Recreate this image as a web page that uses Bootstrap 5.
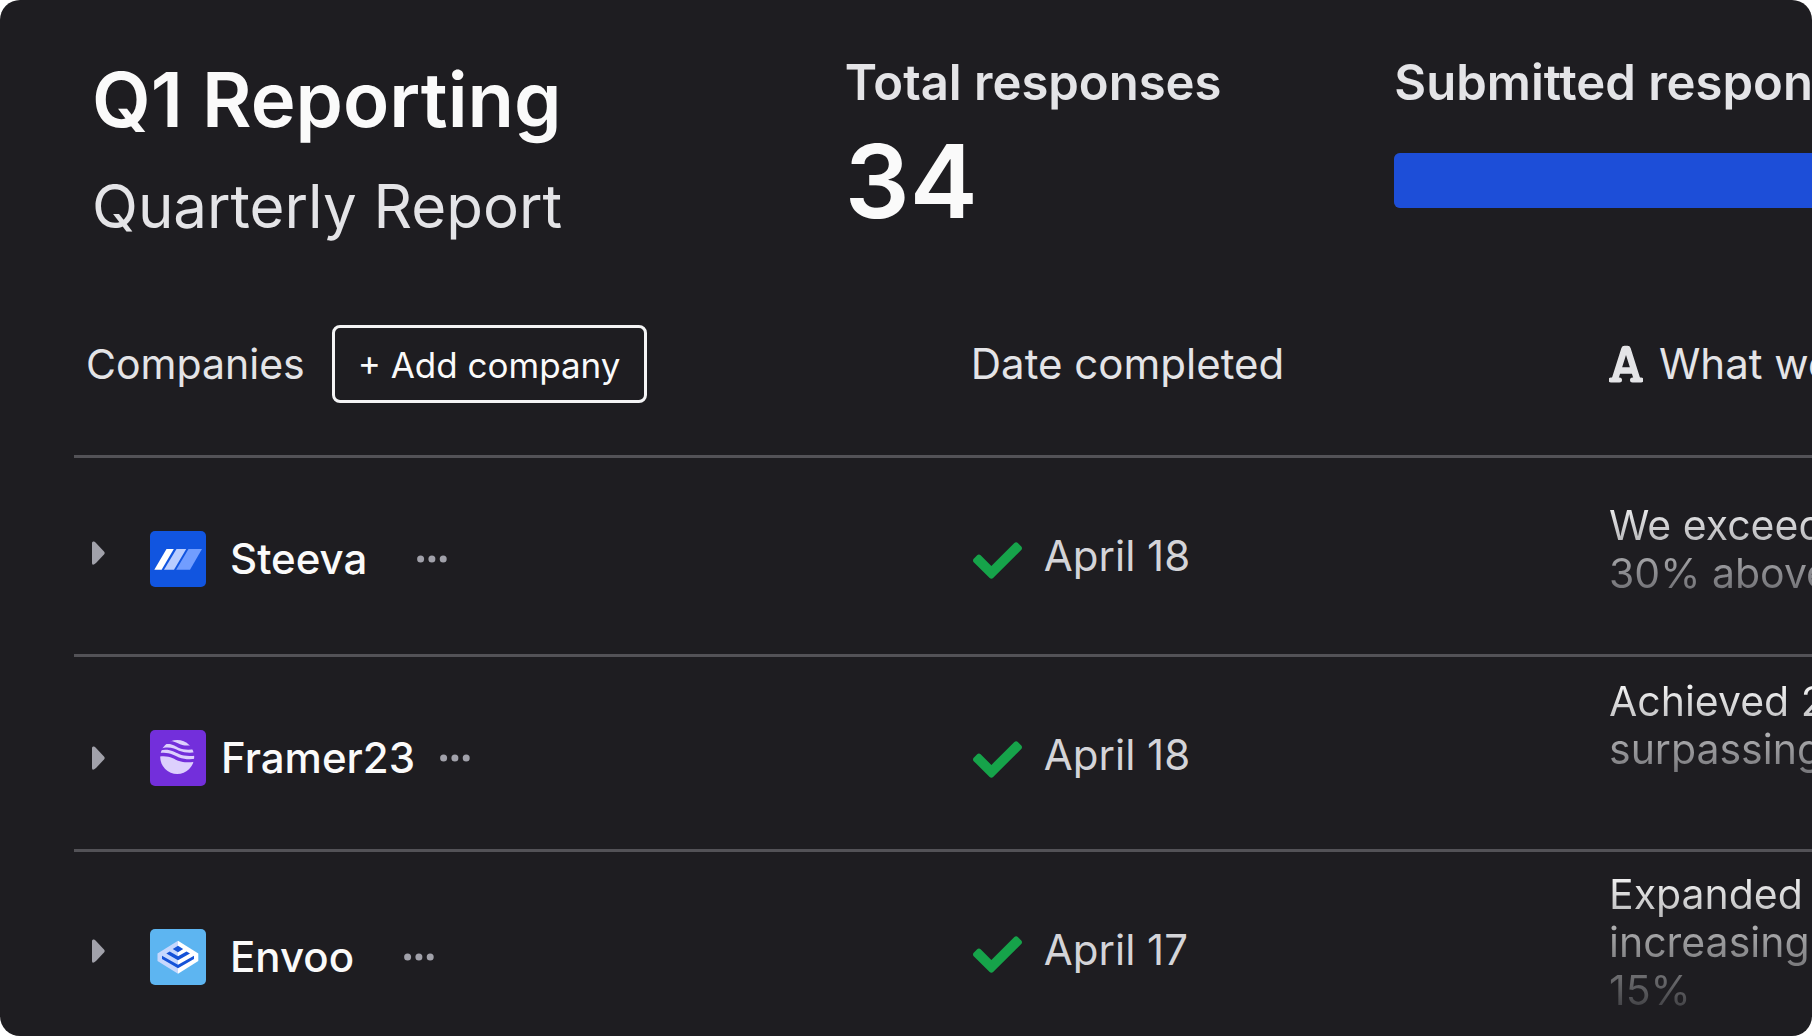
<!DOCTYPE html>
<html lang="en" data-bs-theme="dark">
<head>
<meta charset="utf-8">
<meta name="viewport" content="width=device-width, initial-scale=1">
<title>Q1 Reporting</title>
<link href="https://cdn.jsdelivr.net/npm/bootstrap@5.3.0/dist/css/bootstrap.min.css" rel="stylesheet">
<style>
  body { background: #fff; font-family: Inter, "Liberation Sans", sans-serif; font-size: 42px; line-height: 48px; color: #e4e4e7; }
  .sheet { background: #1e1d21; border-radius: 20px; min-height: 100vh; padding: 55px 0 0 74px; }
  .summary { display: grid; grid-template-columns: 137fr 100fr 76fr; padding-left: 18px; height: 270px; white-space: nowrap; }
  .summary > div { min-width: 0; }
  .report-title { font-size: 76px; line-height: 88px; font-weight: 600; color: #fafafa; margin: 0 0 27px; }
  .report-sub { font-size: 60px; line-height: 72px; margin: 0; }
  .stat-label { font-size: 49px; line-height: 56px; font-weight: 600; color: #e4e4e7; margin: 0; }
  .stat-value { font-size: 102px; line-height: 112px; font-weight: 600; color: #fafafa; margin: 14px 0 0; }
  .submitted-bar { height: 55px; border-radius: 6px 0 0 6px; margin-top: 42px; --bs-progress-bar-bg: #1d4ed8; }
  .responses { width: 120%; table-layout: fixed; border-collapse: separate; border-spacing: 0; }
  .responses th, .responses td { padding: 0; font-weight: 400; vertical-align: top; border-bottom: 3px solid #535257; white-space: nowrap; }
  .responses th { height: 133px; }
  .responses tr:last-child td { border-bottom: 0; }
  .col-company { width: 43%; }
  .col-date { width: 30.6%; }
  .head-cell { height: 78px; }
  .head-companies { font-size: 41px; gap: 27px; padding-left: 12px; }
  .add-btn { --bs-btn-color: #fafafa; --bs-btn-border-color: #f4f4f5; --bs-btn-font-size: 35px; --bs-btn-line-height: 48px; --bs-btn-border-width: 3px; --bs-btn-border-radius: 8px; --bs-btn-hover-bg: #f4f4f5; --bs-btn-hover-color: #1e1d21; padding: 13px 24px 11px 23px; }
  .company { padding: 73px 0 0 18px; }
  .company-low { padding-top: 77px; }
  .company-name { font-weight: 500; color: #fafafa; }
  .plain-btn { background: none; border: 0; padding: 0; display: flex; color: #a1a1aa; }
  .caret-up { padding-bottom: 12px; }
  .logo-gap { margin: 0 24px 0 45px; }
  .logo-gap-tight { margin: 0 15px 0 45px; }
  .dots-far { margin-left: 50px; }
  .dots-near { margin-left: 25px; }
  .date { padding: 74px 0 0 2px; gap: 22px; color: #d4d4d8; }
  .date svg { margin-top: 8px; }
  .answer { font-size: 41px; background-clip: text; -webkit-background-clip: text; color: transparent; width: max-content; }
  .answer-mid { margin-top: 43px; background-image: linear-gradient(#f4f4f5, #68686d); }
  .answer-top { margin-top: 20px; background-image: linear-gradient(#fff, #77777b); }
  .answer-long { margin-top: 18px; background-image: linear-gradient(#fafafa, #3a3a3e); }
  .row-a { height: 199px; }
  .row-b { height: 195px; }
</style>
</head>
<body>
<svg class="d-none" xmlns="http://www.w3.org/2000/svg">
  <symbol id="caret" viewBox="0 0 13 24"><path d="M0 2Q0 0 2 .6Q3 1 4 2L12 10.500Q13.400 12 12 13.500L4 22Q0 25.500 0 22Z" fill="currentColor"/></symbol>
  <symbol id="dots" viewBox="0 0 30 8"><g fill="currentColor"><circle cx="3.600" cy="4" r="3.500"/><circle cx="14.900" cy="4" r="3.500"/><circle cx="26.200" cy="4" r="3.500"/></g></symbol>
  <symbol id="check" viewBox="0 65 512 382"><path fill="#16a34a" d="M173.898 439.404l-166.4-166.4c-9.997-9.997-9.997-26.206 0-36.204l36.203-36.204c9.997-9.998 26.207-9.998 36.204 0L192 312.69 432.095 72.596c9.997-9.997 26.207-9.997 36.204 0l36.203 36.204c9.997 9.997 9.997 26.206 0 36.204l-294.4 294.401c-9.998 9.997-26.207 9.997-36.204-.001z"/></symbol>
</svg>
<main class="sheet overflow-hidden">
  <header class="summary">
    <div>
      <h1 class="report-title">Q1 Reporting</h1>
      <p class="report-sub">Quarterly Report</p>
    </div>
    <div>
      <h2 class="stat-label">Total responses</h2>
      <p class="stat-value">34</p>
    </div>
    <div>
      <h2 class="stat-label" id="submitted">Submitted responses</h2>
      <div class="progress submitted-bar" role="progressbar" aria-labelledby="submitted" aria-valuenow="100" aria-valuemin="0" aria-valuemax="100">
        <div class="progress-bar w-100"></div>
      </div>
    </div>
  </header>
  <table class="responses">
    <colgroup><col class="col-company"><col class="col-date"><col></colgroup>
    <thead>
      <tr>
        <th scope="col"><div class="head-cell head-companies d-flex align-items-center"><span>Companies</span><button type="button" class="btn add-btn">+ Add company</button></div></th>
        <th scope="col"><div class="head-cell d-flex align-items-center">Date completed</div></th>
        <th scope="col"><div class="head-cell d-flex align-items-center gap-3">
          <svg width="34" height="38" viewBox="0 0 34 38" fill="none" stroke="#e4e4e7" stroke-linejoin="round" aria-hidden="true"><path d="M6 34L15.500 4H18.500L28 34M10 25.500H24" stroke-width="6.500"/><path d="M2 35H10.500M23.500 35H32" stroke-width="5" stroke-linecap="round"/></svg>
          <span>What went well</span></div></th>
      </tr>
    </thead>
    <tbody>
      <tr class="row-a">
        <td><div class="company d-flex align-items-center">
          <button type="button" class="plain-btn caret-up" aria-label="Expand Steeva"><svg width="13" height="24"><use href="#caret"/></svg></button>
          <svg class="logo-gap" width="56" height="56" viewBox="0 0 56 56" aria-hidden="true"><rect width="56" height="56" rx="5" fill="#1155e0"/><path d="M4.300 38.700L16.500 18H23.800L11.600 38.700Z" fill="#fff"/><path d="M14 38.700L26.500 18H36.200L24 38.700Z" fill="#b9cdff"/><path d="M26.200 38.700L38.500 18H52L40 38.700Z" fill="#719dff"/></svg>
          <span class="company-name">Steeva</span>
          <button type="button" class="plain-btn dots-far" aria-label="Steeva options"><svg width="30" height="8"><use href="#dots"/></svg></button>
        </div></td>
        <td><div class="date d-flex align-items-center"><svg width="49" height="37" aria-hidden="true"><use href="#check"/></svg><span>April 18</span></div></td>
        <td><div class="answer answer-mid">We exceeded<br>30% above</div></td>
      </tr>
      <tr class="row-b">
        <td><div class="company d-flex align-items-center">
          <button type="button" class="plain-btn" aria-label="Expand Framer23"><svg width="13" height="24"><use href="#caret"/></svg></button>
          <svg class="logo-gap-tight" width="56" height="56" viewBox="0 0 56 56" aria-hidden="true"><defs><clipPath id="disc"><circle cx="27.200" cy="27" r="17"/></clipPath></defs><rect width="56" height="56" rx="5" fill="#732fdb"/><g clip-path="url(#disc)" fill="#ddd0fd"><path d="M8 26.800C18 24.500 24 29 29 31C34 32.800 40 32.300 46 31.500V46H8Z"/><path d="M8 21.200C18 17.500 24 22 29 24C34 26.300 40 26.300 46 25.500V28.700C40 29.800 34 29.300 29 27.500C24 25.500 18 21 8 23.500Z"/><path d="M12 15.500C20 11.500 25 16 29 18C33 19.800 39 20.200 45 19V22.300C39 23.200 34 22.500 29 20.700C24 18.500 19 15.500 8 19.300Z"/><path d="M16 11.500C22 10 27 13 30 14.300C34 16 38 15.800 42 15V8H20Z"/></g></svg>
          <span class="company-name">Framer23</span>
          <button type="button" class="plain-btn dots-near" aria-label="Framer23 options"><svg width="30" height="8"><use href="#dots"/></svg></button>
        </div></td>
        <td><div class="date d-flex align-items-center"><svg width="49" height="37" aria-hidden="true"><use href="#check"/></svg><span>April 18</span></div></td>
        <td><div class="answer answer-top">Achieved 20%<br>surpassing</div></td>
      </tr>
      <tr>
        <td><div class="company company-low d-flex align-items-center">
          <button type="button" class="plain-btn caret-up" aria-label="Expand Envoo"><svg width="13" height="24"><use href="#caret"/></svg></button>
          <svg class="logo-gap" width="56" height="56" viewBox="0 0 56 56" aria-hidden="true"><rect width="56" height="56" rx="5" fill="#5db5f1"/><path d="M28 11.700L7.500 24.500V32L28 44.700Z" fill="#c7d8fd"/><path d="M28 11.700L48.300 24.500V32L28 44.700Z" fill="#fff"/><g fill="#1553d8"><path d="M28 16.800L33.200 20L28 23.300L22.800 20Z"/><path d="M16.300 24.600L19.700 22.400L28 27.300L36.500 22.400L40 24.600L28 31.300Z"/><path d="M12 26.800L28 35.700L44 26.800V30L28 39.300L12 30Z"/></g></svg>
          <span class="company-name">Envoo</span>
          <button type="button" class="plain-btn dots-far" aria-label="Envoo options"><svg width="30" height="8"><use href="#dots"/></svg></button>
        </div></td>
        <td><div class="date d-flex align-items-center"><svg width="49" height="37" aria-hidden="true"><use href="#check"/></svg><span>April 17</span></div></td>
        <td><div class="answer answer-long">Expanded<br>increasing<br>15%</div></td>
      </tr>
    </tbody>
  </table>
</main>
<script src="https://cdn.jsdelivr.net/npm/bootstrap@5.3.0/dist/js/bootstrap.bundle.min.js"></script>
</body>
</html>
